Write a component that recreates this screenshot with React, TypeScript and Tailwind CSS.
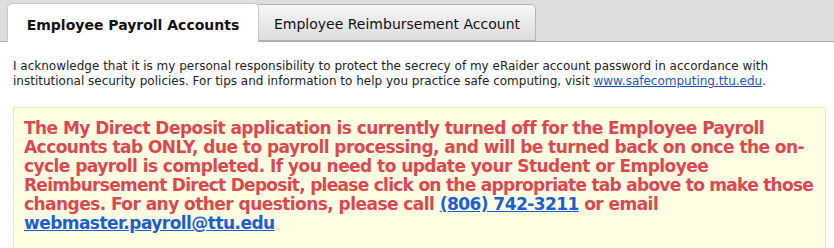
const App = () => {
  return (
    <div className="w-[834px] h-[248px] overflow-hidden bg-white font-['DejaVu_Sans',Verdana,sans-serif]">
      <div className="h-[42px] bg-[#dedede] border-b border-[#aaaaaa] flex items-end pl-[7px]">
        <div className="h-[39px] w-[252px] -mb-px pt-[5px] bg-white border border-b-0 border-[#c5c5c5] rounded-t-[5px] flex items-center justify-center text-[14px] font-bold text-[#111]">
          Employee Payroll Accounts
        </div>
        <div className="h-[37px] w-[277px] pt-[3px] bg-gradient-to-b from-[#f7f7f7] to-[#dcdcdc] border border-l-0 border-[#b5b5b5] rounded-tr-[5px] flex items-center justify-center text-[14px] text-[#111]">
          Employee Reimbursement Account
        </div>
      </div>

      <div className="px-[13px] pt-[17px]">
        <p className="text-[12px] leading-[15px] text-[#222]">
          I acknowledge that it is my personal responsibility to protect the secrecy of my eRaider account password in accordance with
          institutional security policies. For tips and information to help you practice safe computing, visit{" "}
          <a href="#" className="text-[#1a55c7] underline">
            www.safecomputing.ttu.edu
          </a>
          .
        </p>

        <div className="mt-[18px] w-[813px] bg-[#fffde2] border border-[#efeaa8] pl-[10px] pr-[2px] pt-[11px] pb-[15px]">
          <p className="text-[17px] leading-[19px] font-bold tracking-[-0.55px] text-[#dc4850] whitespace-nowrap">
            The My Direct Deposit application is currently turned off for the Employee Payroll
            <br />
            Accounts tab ONLY, due to payroll processing, and will be turned back on once the on-
            <br />
            cycle payroll is completed. If you need to update your Student or Employee
            <br />
            <span className="tracking-[-0.72px]">
              Reimbursement Direct Deposit, please click on the appropriate tab above to make those
            </span>
            <br />
            changes. For any other questions, please call{" "}
            <a href="#" className="text-[#1b5fd0] underline">
              (806) 742-3211
            </a>{" "}
            or email
            <br />
            <a href="#" className="text-[#1b5fd0] underline">
              webmaster.payroll@ttu.edu
            </a>
          </p>
        </div>

        <div className="w-[813px] h-[10px] bg-[#ececec] flex border-t border-[#dddddd]">
          <div className="w-[21px] border-r border-[#d0d0d0]" />
          <div className="w-[121px] border-r border-[#d0d0d0]" />
          <div className="w-[131px] border-r border-[#d0d0d0]" />
          <div className="w-[237px] border-r border-[#d0d0d0]" />
          <div className="w-[111px] border-r border-[#d0d0d0]" />
          <div className="w-[112px] border-r border-[#d0d0d0]" />
          <div className="w-[40px] border-r border-[#d0d0d0]" />
          <div className="flex-1" />
        </div>
      </div>
    </div>
  );
};

export default App;
